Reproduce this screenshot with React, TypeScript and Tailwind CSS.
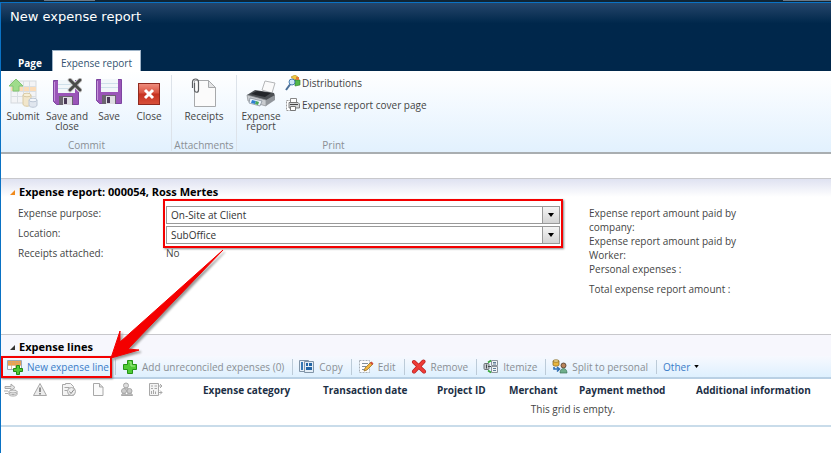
import React from 'react';

type IconProps = { className?: string };

/* ---------- ribbon icons ---------- */

const SubmitIcon = () => (
  <svg viewBox="0 0 30 30" className="h-[30px] w-[30px]" aria-hidden="true">
    <rect x="3" y="3" width="25" height="22" fill="#f3f4f6" stroke="#d5d9dd" />
    <rect x="3" y="9" width="25" height="4" fill="#fbdcb8" />
    <path d="M3 8.5h25M3 13.5h25M3 18.500h25M9.500 3v22M15.500 3v22M21.500 3v22" stroke="#dadfe3" fill="none" />
    <path d="M8 1l7 7h-4v5H5V8H1z" fill="#9fdc8c" stroke="#82c573" />
    <path d="M15 17v9c0 3 8 3 8 0v-9z" fill="#f1e6cb" stroke="#d9caa4" />
    <ellipse cx="19" cy="17" rx="4" ry="1.800" fill="#f8efd6" stroke="#d9caa4" />
    <path d="M21 22v5c0 3 8 3 8 0v-5z" fill="#e0e6ee" stroke="#bcc7d5" />
    <ellipse cx="25" cy="22" rx="4" ry="1.800" fill="#f3f6fa" stroke="#bcc7d5" />
  </svg>
);

const Floppy = () => (
  <>
    <path d="M1.500 3.500h25v24h-22l-3-3z" fill="#9a55b8" stroke="#7d45a0" />
    <path d="M2.500 5v19" stroke="#c795dc" />
    <rect x="6" y="3" width="17" height="13" fill="#f2f7fa" />
    <path d="M6 7.500h17M6 11.500h17" stroke="#cfe0ea" />
    <rect x="7" y="19" width="14" height="9" fill="#6b6570" />
    <rect x="11" y="20" width="9" height="8" fill="#dedde2" />
    <rect x="12" y="21" width="3" height="6" fill="#4b3a58" />
  </>
);

const SaveIcon = () => (
  <svg viewBox="0 0 30 30" className="h-[30px] w-[30px]" aria-hidden="true">
    <g transform="translate(1 -2)"><Floppy /></g>
  </svg>
);

const SaveCloseIcon = () => (
  <svg viewBox="0 0 30 30" className="h-[30px] w-[30px]" aria-hidden="true">
    <g transform="translate(0 -1)"><Floppy /></g>
    <path d="M18 2l10 10M28 2L18 12" stroke="#dadada" strokeWidth="5" strokeLinecap="round" />
    <path d="M18 2l10 10M28 2L18 12" stroke="#4a4a4a" strokeWidth="3" strokeLinecap="round" />
  </svg>
);

const CloseIcon = () => (
  <svg viewBox="0 0 30 30" className="h-[30px] w-[30px]" aria-hidden="true">
    <defs>
      <linearGradient id="closeRed" x1="0" y1="0" x2="0" y2="1">
        <stop offset="0" stopColor="#ef8f80" />
        <stop offset="0.45" stopColor="#d9523f" />
        <stop offset="0.5" stopColor="#c53120" />
        <stop offset="1" stopColor="#d8503a" />
      </linearGradient>
    </defs>
    <rect x="4.500" y="5.500" width="21" height="21" fill="url(#closeRed)" stroke="#8f2a20" />
    <path d="M11 12l8 8M19 12l-8 8" stroke="#fff" strokeWidth="3" />
  </svg>
);

const ReceiptsIcon = () => (
  <svg viewBox="0 0 30 30" className="h-[30px] w-[30px]" aria-hidden="true">
    <path d="M5.500 2.500h14l7 7v19h-21z" fill="#fbfbfb" stroke="#a7a9ab" />
    <path d="M19.500 2.500v7h7z" fill="#e4e5e6" stroke="#a7a9ab" />
    <path d="M3.500 10V4c0-4 6-4 6 0v8c0 3-4 3-4 0V5" fill="none" stroke="#5c5f62" strokeWidth="1.200" />
  </svg>
);

const PrinterIcon = () => (
  <svg viewBox="0 0 30 30" className="h-[30px] w-[30px]" aria-hidden="true">
    <path d="M16 12L19 3l10 2-3 10z" fill="#fafafa" stroke="#b4b6b8" />
    <path d="M1 17l8-5 19 3 1 3-9 6z" fill="#4b4f53" />
    <path d="M5 16l6-3 14 2-6 4z" fill="#23262a" />
    <path d="M1 17l19 5v6L2 23z" fill="#c9ccd0" stroke="#8b8f94" strokeWidth="0.700" />
    <path d="M20 22l9-5v5l-9 6z" fill="#92969b" />
    <path d="M4 20l12 3-2 5-11-3z" fill="#eef5fb" stroke="#7d8790" strokeWidth="0.700" />
    <path d="M6 22l4 1-1 3-4-1z" fill="#2f7fd0" />
    <path d="M10 23l3 1-1 3-3-1z" fill="#48a85a" />
  </svg>
);

const DistributionsIcon = () => (
  <svg viewBox="0 0 16 16" className="h-4 w-4 shrink-0" aria-hidden="true">
    <path d="M6 2l4-2 3 2-3 3z" fill="#f3c93c" stroke="#a7861c" strokeWidth="0.600" />
    <path d="M10 5h5v5l-5 1z" fill="#52b848" stroke="#2f7a2a" strokeWidth="0.600" />
    <path d="M11 2h3v3h-3z" fill="#e07a3a" />
    <circle cx="7" cy="7" r="3" fill="#cfe6f8" stroke="#4a7fb0" />
    <path d="M5 9.500L1 15" stroke="#4a6f98" strokeWidth="2" />
  </svg>
);

const CoverPageIcon = () => (
  <svg viewBox="0 0 16 16" className="h-4 w-4 shrink-0" aria-hidden="true">
    <path d="M1.500 3.500h5v10h-5z" fill="#fff" stroke="#9b9b9b" strokeDasharray="2 1" />
    <path d="M5.500 1.500h6v4h-6z" fill="#fff" stroke="#888" />
    <path d="M4 5.500h9l1.500 1.500v4H4z" fill="#d5d7d9" stroke="#666" strokeWidth="0.800" />
    <path d="M5 7.500h8" stroke="#444" />
    <path d="M5.500 9.500h5v4h-5z" fill="#fff" stroke="#777" />
  </svg>
);

/* ---------- toolbar icons ---------- */

const NewLineIcon = () => (
  <svg viewBox="0 0 16 16" className="h-4 w-4" aria-hidden="true">
    <path d="M.5 1.500h14v9H.5z" fill="#fff" stroke="#9aa9b8" />
    <path d="M1 2h13v4H1z" fill="#f0a24a" />
    <path d="M1 6.500h13M1 3.500h13M4.500 2v8M8.500 2v8M11.500 2v8" stroke="#cfa574" strokeWidth="0.700" />
    <path d="M9.500 6.500h3v3h3v3h-3v3h-3v-3h-3v-3h3z" fill="#4fc832" stroke="#1f8a14" />
  </svg>
);

const PlusIcon = () => (
  <svg viewBox="0 0 16 16" className="h-4 w-4" aria-hidden="true">
    <path d="M5.500 1.500h5v4h4v5h-4v4h-5v-4h-4v-5h4z" fill="#4fcb35" stroke="#249416" strokeLinejoin="round" />
    <path d="M7 3h2v4h4" fill="none" stroke="#a4ec8e" />
  </svg>
);

const CopyIcon = () => (
  <svg viewBox="0 0 16 16" className="h-4 w-4" aria-hidden="true">
    <path d="M.5 1.500h9v11h-9z" fill="#e9f1f8" stroke="#8195a8" />
    <path d="M2 3h2v8H2zM5 3h1v3H5z" fill="#3779b5" />
    <path d="M5.500 2.500h9v11h-9z" fill="#e3edf6" stroke="#8195a8" />
    <path d="M7 4h2v3H7zM10 4h3v3h-3zM7 8h6v3H7z" fill="#2466a5" />
  </svg>
);

const EditIcon = () => (
  <svg viewBox="0 0 16 16" className="h-4 w-4" aria-hidden="true">
    <path d="M1.500 1.500h10v12h-10z" fill="#fcfcfc" stroke="#a8b0b8" strokeDasharray="2 1" />
    <path d="M4 4.500h6M4 7.500h4M4 10.500h2" stroke="#7f8c99" />
    <path d="M6 12l1-3 6-6 2 2-6 6z" fill="#f2b53e" stroke="#8a6420" strokeWidth="0.700" />
    <path d="M12 4l1.500-1.500 2 2L14 6z" fill="#cf4d3d" />
  </svg>
);

const RemoveIcon = () => (
  <svg viewBox="0 0 16 16" className="h-4 w-4" aria-hidden="true">
    <path d="M3 3l10 9.500M12.500 2.500L3 12.500" stroke="#b32020" strokeWidth="4" strokeLinecap="round" />
    <path d="M3 3l10 9.500M12.500 2.500L3 12.500" stroke="#ee3b37" strokeWidth="2.800" strokeLinecap="round" />
  </svg>
);

const ItemizeIcon = () => (
  <svg viewBox="0 0 16 16" className="h-4 w-4" aria-hidden="true">
    <rect x="1" y="4.500" width="5" height="6" rx="1" fill="#c6cacd" stroke="#6d7378" />
    <path d="M3.500 5.500v4M5 7.500h3" stroke="#44494d" />
    <path d="M8.500 1.500h6v5h-6zM8.500 7.500h6v6h-6z" fill="#f2f4f5" stroke="#8d959c" />
    <path d="M10 3.500h3M10 5h3M10 9.500h3M10 11.500h3" stroke="#5d7d99" />
    <path d="M5 3.500l3-2M5 11.500l3 2" stroke="#36a839" strokeWidth="1.600" fill="none" />
  </svg>
);

const SplitIcon = () => (
  <svg viewBox="0 0 16 16" className="h-4 w-4" aria-hidden="true">
    <path d="M1 2v4c0 1.500 6 1.500 6 0V2z" fill="#e9b63f" stroke="#7d5b17" strokeWidth="0.700" />
    <ellipse cx="4" cy="2" rx="3" ry="1.200" fill="#fbe299" stroke="#7d5b17" strokeWidth="0.700" />
    <path d="M2 8v2h5M5 8l2.500 2L5 12.500" fill="none" stroke="#2e6fb5" strokeWidth="1.600" />
    <circle cx="11.500" cy="6.500" r="2.500" fill="#b9845b" stroke="#4b3624" strokeWidth="0.800" />
    <path d="M8 14c0-6 7-6 7 0z" fill="#6fae8b" stroke="#3e7659" strokeWidth="0.700" />
  </svg>
);

/* ---------- grid header icons, all grey ---------- */

const gridIcons = [
  {
    label: 'Reconciled',
    art: (
      <>
        <path d="M2 4.500h6V2l4 3.500-4 3V6.500H2z" fill="#e4e4e4" />
        <ellipse cx="10" cy="9.500" rx="4" ry="1.500" fill="#ececec" />
        <path d="M6 9.500v3c0 2 8 2 8 0v-3M6 11c0 2 8 2 8 0M1 9h4M2 11.500h3" fill="none" />
      </>
    ),
  },
  {
    label: 'Warning',
    art: (
      <>
        <path d="M8 1.500l6.500 12h-13z" fill="#ececec" strokeLinejoin="round" />
        <path d="M8 5.500v4.500M8 11v1.500" stroke="#777" strokeWidth="1.600" />
      </>
    ),
  },
  {
    label: 'Approval',
    art: (
      <>
        <path d="M1.500 2.500h3v-1h5l3 3v9h-11zM3.500 5.500h5M3.500 8.500h3" fill="#f4f4f4" />
        <circle cx="10.500" cy="9.500" r="4" fill="#ededed" />
        <path d="M8.500 9.500l1.500 2 3-4" fill="none" stroke="#888" />
      </>
    ),
  },
  {
    label: 'Document',
    art: (
      <>
        <path d="M3.500 1.500h6l3.500 3.500v8.500H3.500z" fill="#fafafa" />
        <path d="M9.500 1.500v3.500H13" fill="#ddd" />
      </>
    ),
  },
  {
    label: 'Guests',
    art: (
      <>
        <circle cx="7" cy="3.500" r="2.500" fill="#ddd" />
        <path d="M3.500 9c0-4 7-4 7 0z" fill="#d4d4d4" />
        <circle cx="5" cy="9" r="2.500" fill="#ccc" />
        <circle cx="10.500" cy="9" r="2.500" fill="#ccc" />
        <path d="M2.500 13.500c0-3 4.500-3 5 0 .5-3 6-3 6 0z" fill="#bbb" />
      </>
    ),
  },
  {
    label: 'Itemized',
    art: (
      <>
        <path d="M1.500 1.500h9v12h-9z" fill="#f4f4f4" />
        <path d="M3 4h2M6.500 4H9M3 6.500h2M6.500 6.500H9M3.500 9v3M5.500 8v4M7.500 9.500v2.500M10 4h4M12 2l2 2-2 2M10 10.500h4M12 8.500l2 2-2 2" fill="none" />
      </>
    ),
  },
];

const Caret = ({ className }: IconProps) => (
  <svg viewBox="0 0 6 4" className={className} aria-hidden="true">
    <path d="M0 0h6L3 4z" fill="currentColor" />
  </svg>
);

const Corner = ({ className }: IconProps) => (
  <svg viewBox="0 0 6 6" className={className} aria-hidden="true">
    <path d="M6 0v6H0z" fill="currentColor" />
  </svg>
);

const commitActions = [
  { label: 'Submit', icon: SubmitIcon, width: 'w-[42px]' },
  { label: 'Save and close', icon: SaveCloseIcon, width: 'w-[46px]' },
  { label: 'Save', icon: SaveIcon, width: 'w-[38px]' },
  { label: 'Close', icon: CloseIcon, width: 'w-[42px]' },
];

const toolbarActions = [
  { label: 'Add unreconciled expenses (0)', icon: PlusIcon },
  { label: 'Copy', icon: CopyIcon },
  { label: 'Edit', icon: EditIcon },
  { label: 'Remove', icon: RemoveIcon },
  { label: 'Itemize', icon: ItemizeIcon },
  { label: 'Split to personal', icon: SplitIcon },
];

const columns = [
  { label: 'Expense category', width: 'w-[120px]' },
  { label: 'Transaction date', width: 'w-[114px]' },
  { label: 'Project ID', width: 'w-[72px]' },
  { label: 'Merchant', width: 'w-[70px]' },
  { label: 'Payment method', width: 'w-[117px]' },
  { label: 'Additional information', width: '' },
];

const fields = [
  { id: 'purpose', label: 'Expense purpose:', value: 'On-Site at Client' },
  { id: 'location', label: 'Location:', value: 'SubOffice' },
];

const Highlight = ({ className }: IconProps) => (
  <div className={`pointer-events-none absolute border-2 border-[#f40000] shadow-[1px_1px_2px_#888] ${className}`} />
);

function BigButton({ label, icon: Icon, width }: { label: string; icon: React.FC; width: string }) {
  return (
    <button className={`flex flex-col items-center gap-[3px] pt-[3px] ${width}`}>
      <Icon />
      <span className="leading-[10px]">{label}</span>
    </button>
  );
}

function RibbonGroup({ title, className, children }: { title: string; className: string; children: React.ReactNode }) {
  return (
    <div className={`flex flex-col justify-between ${className}`}>
      <div className="flex items-start">{children}</div>
      <div className="text-center leading-3 text-[#8a8f94]">{title}</div>
    </div>
  );
}

export default function App() {
  return (
    <div className="min-h-screen bg-white font-['Open_Sans','Noto_Sans',sans-serif] text-[10px] leading-[14px] text-[#444]">
      <div className="flex h-[2px] justify-between bg-[#0f2434] pl-11">
        <div className="h-px w-[51px] bg-[#6b7885]" />
        <div className="h-px w-12 bg-[#6b7885]" />
      </div>

      <div className="min-h-[calc(100vh-2px)] border-t border-l border-[#0a72c4]">
        <header className="flex h-[68px] flex-col justify-between bg-[#00274b] bg-linear-to-b from-[#25466b] to-[#00274b] to-30%">
          <h1 className="px-[9px] pt-1 font-['DejaVu_Sans','Noto_Sans',sans-serif] text-[13px] leading-5 text-white">
            New expense report
          </h1>
          <nav className="flex items-end">
            <a href="#page" className="pr-[10px] pb-px pl-[17px] font-bold text-white">Page</a>
            <a href="#expense-report" className="border border-b-0 border-[#9fb4c8] bg-white px-2 pt-[5px] pb-px text-[#33526f]">
              Expense report
            </a>
          </nav>
        </header>

        <div className="flex h-[83px] border-b-2 border-[#a9aeb1] bg-linear-to-b from-white to-[#e2f1fe] pt-1 pb-px">
          <RibbonGroup title="Commit" className="w-[171px] border-r border-[#dde3ea] pl-px">
            {commitActions.map((a) => (
              <BigButton key={a.label} {...a} />
            ))}
          </RibbonGroup>
          <RibbonGroup title="Attachments" className="w-[65px] border-r border-[#dde3ea]">
            <BigButton label="Receipts" icon={ReceiptsIcon} width="w-full" />
          </RibbonGroup>
          <RibbonGroup title="Print" className="w-[193px]">
            <BigButton label="Expense report" icon={PrinterIcon} width="w-[48px]" />
            <div className="flex flex-col items-start gap-[6px] whitespace-nowrap">
              <button className="flex items-center gap-px"><DistributionsIcon />Distributions</button>
              <button className="flex items-center gap-px"><CoverPageIcon />Expense report cover page</button>
            </div>
          </RibbonGroup>
        </div>

        <section className="mt-6 min-h-[156px] border-t border-[#c8c8cc] bg-linear-to-b from-[#dfe2f1] to-white to-[18px]">
          <h2 className="flex items-center gap-1 px-[9px] pt-[6px] text-[11px] leading-[14px] font-bold text-black">
            <Corner className="h-[5px] w-[5px] text-[#f08a1c]" />
            Expense report: 000054, Ross Mertes
          </h2>
          <div className="grid grid-cols-[148px_minmax(0,394fr)_minmax(0,271fr)] pt-[7px] pl-[17px]">
            <div>
              {fields.map((f) => (
                <label key={f.id} htmlFor={f.id} className="block h-5">{f.label}</label>
              ))}
              <div className="h-5">Receipts attached:</div>
            </div>
            <div>
              <div className="relative">
                {fields.map((f) => (
                  <div key={f.id} className="relative flex h-5">
                    <select
                      id={f.id}
                      defaultValue={f.value}
                      className="h-[18px] w-full appearance-none border border-[#999] bg-white px-1 leading-[14px] text-[#333]"
                    >
                      <option>{f.value}</option>
                    </select>
                    <span className="pointer-events-none absolute top-px right-px flex h-4 w-[17px] items-center justify-center border-l border-[#999] bg-linear-to-b from-[#f4f4f4] to-[#d4d4d4] text-black">
                      <Caret className="h-1 w-[6px]" />
                    </span>
                  </div>
                ))}
                <Highlight className="-inset-x-[3px] -top-[7px] -bottom-[2px]" />
                {/* arrow from the fields down to the new line button */}
                <svg viewBox="0 0 120 114" className="pointer-events-none absolute top-[42px] -left-[58px] z-10 h-[114px] w-[120px] drop-shadow-[2px_2px_1px_#999]" aria-hidden="true">
                  <path d="M115 2L12 94 12 83 3 110 31 102 20 101z" fill="#f40000" stroke="#f40000" strokeLinejoin="round" />
                </svg>
              </div>
              <div className="h-5">No</div>
            </div>
            <div className="pl-[29px]">
              <div className="w-[150px]">Expense report amount paid by company:</div>
              <div className="w-[150px]">Expense report amount paid by Worker:</div>
              <div>Personal expenses :</div>
              <div className="pt-[6px]">Total expense report amount :</div>
            </div>
          </div>
        </section>

        <section>
          <h2 className="flex h-[22px] items-center gap-1 border-t border-[#c8c8cc] bg-[#f7f7fd] px-[9px] pt-[3px] text-[11px] leading-[14px] font-bold text-black">
            <Corner className="h-[5px] w-[5px] text-[#333]" />
            Expense lines
          </h2>
          <div className="flex h-[23px] items-center border-b-2 border-[#b9d0e4] bg-linear-to-b from-[#f7f9fe] to-[#def0fe] whitespace-nowrap text-[#8a8f94]">
            <div className="relative mr-[3px] flex h-full w-[111px] items-center">
              <button className="flex items-center gap-1 pl-[6px] text-[#3a7cc8]"><NewLineIcon />New expense line</button>
              <Highlight className="inset-x-0 -bottom-px top-0" />
            </div>
            {toolbarActions.map(({ label, icon: Icon }) => (
              <button key={label} className="flex items-center gap-1 border-l border-[#bccbd8] pr-2 pl-[6px]">
                <Icon />
                {label}
              </button>
            ))}
            <button className="flex items-center gap-1 border-l border-[#bccbd8] px-[6px] text-[#3a7cc8]">
              Other
              <Caret className="h-[3px] w-[5px] text-black" />
            </button>
          </div>

          <table className="w-full table-fixed border-b-2 border-[#c9dcea] text-left">
            <thead>
              <tr className="h-[22px]">
                {gridIcons.map((g) => (
                  <th key={g.label} className="w-[29px] pl-[2px]">
                    <svg viewBox="0 0 16 16" role="img" aria-label={g.label} className="h-4 w-4" fill="none" stroke="#a8a8a8">
                      {g.art}
                    </svg>
                  </th>
                ))}
                <th className="w-[28px]" />
                {columns.map((c) => (
                  <th key={c.label} className={`whitespace-nowrap text-[#1c2f45] ${c.width}`}>{c.label}</th>
                ))}
              </tr>
            </thead>
            <tbody>
              <tr className="h-[25px]">
                <td colSpan={8} />
                <td colSpan={5} className="pr-2 pb-2 text-center">This grid is empty.</td>
              </tr>
            </tbody>
          </table>
        </section>
      </div>
    </div>
  );
}
